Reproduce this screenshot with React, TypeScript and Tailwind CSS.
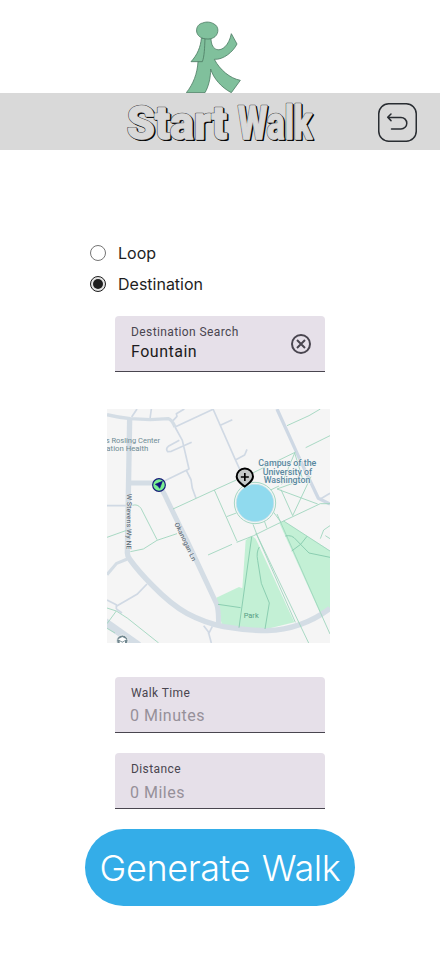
import React from "react";

function Walker() {
  return (
    <svg className="ml-[186px] block h-[72px] w-[55px]" viewBox="228 33 165 216" fill="#80c09c" stroke="#4b7a62" strokeWidth="2.4" strokeLinejoin="round">
      <path d="M303 86C304 135 352 130 364 71L381 102C370 125 340 150 313 148C330 180 360 205 391 211L364 248C335 233 310 205 302 177C302 205 295 231 285 248H229C250 222 262 190 264 155H243C262 135 272 110 274 85Z" />
      <path d="M285 86C284 112 283 140 277 155H264" fill="none" />
      <path d="M276 84C252 74 256 43 278 39C290 34 303 36 312 42C327 49 327 70 315 80C306 88 288 89 276 84Z" />
    </svg>
  );
}

function Word({ x, width, children }: { x: number; width: number; children: string }) {
  const common = { x, textLength: width, lengthAdjust: "spacingAndGlyphs" as const };
  return (
    <g strokeLinejoin="round">
      <text {...common} y="45.5" transform="translate(1.3 1.1)" fill="#000" stroke="#000" strokeWidth="2.2">{children}</text>
      <text {...common} y="45.5" fill="#444" stroke="#444" strokeWidth="2.5">{children}</text>
      <text {...common} y="45.5" fill="#d9d9d9" stroke="#d9d9d9" strokeWidth="1.4">{children}</text>
    </g>
  );
}

function Field({ label, value, valueClass, clear }: { label: string; value: string; valueClass: string; clear?: boolean }) {
  return (
    <div className="flex h-14 w-[210px] items-start justify-between rounded-t border-b border-[#49454f] bg-[#e6e0e9] pl-4 pr-3 pt-2 font-['Roboto',sans-serif]">
      <div>
        <div className="text-xs leading-4 tracking-[0.4px] text-[#49454f]">{label}</div>
        <div className={`text-base leading-6 tracking-[0.5px] ${valueClass}`}>{value}</div>
      </div>
      {clear && (
        <svg className="mt-2 h-6 w-6" viewBox="0 0 24 24" fill="none" stroke="#49454f" strokeWidth="2">
          <circle cx="12" cy="12" r="9" />
          <path d="M8 8l8 8M16 8l-8 8" />
        </svg>
      )}
    </div>
  );
}

function CampusMap() {
  return (
    <svg className="block h-[234px] w-[223px]" viewBox="0 0 669 702" fontFamily="Roboto, sans-serif">
      <rect width="669" height="702" fill="#f5f5f5" />
      <g fill="#c3f0d5">
        <path d="M416 394L434 380L446 389L562 640L470 662L345 650L328 566L396 534L406 538Z" />
        <path d="M517 342L530 336L669 425V600L638 610Z" />
      </g>
      <g fill="none" stroke="#d0d9e4" strokeWidth="5" strokeLinejoin="round">
        <path d="M74 24L90 0M129 30L133 0M198 35L210 22L208 14L232 0M204 54L320 0" />
        <path d="M204 54L226 94L246 180L172 216M217 94L184 112Q175 120 182 128L193 127L254 100M238 184L252 212L256 238L267 268" />
        <path d="M318 0L385 152L400 185M340 49L376 32M385 153L413 138L420 121M0 290H58M640 270L669 253" />
        <path d="M120 525L90 556L28 592M290 650L304 668L313 702M316 652L304 676" />
        <path d="M28 600L45 612M0 573L28 587V600" />
      </g>
      <g fill="none" stroke="#d4dde5" strokeLinejoin="round">
        <path d="M0 17Q38 26 70 29L130 32L184 29Q194 31 204 54" strokeWidth="10" />
        <path d="M68 28L61 432Q61 442 69 452Q95 488 135 528Q191 586 240 613Q290 640 350 653Q420 665 480 665Q585 661 669 598" strokeWidth="16" />
        <path d="M70 222H152L172 255Q210 335 240 395L329 585Q336 608 334 650" strokeWidth="15" />
        <path d="M510 0L573 139L634 268L669 285" stroke="#ced8e4" strokeWidth="10" />
        <path d="M61 450L29 463L0 497" strokeWidth="9" />
        <path d="M-10 636L95 710" strokeWidth="24" />
      </g>
      <g fill="none" stroke="#9cd4bc" strokeWidth="2.6">
        <path d="M198 300L322 243L388 213M437 192L566 129M596 116L669 80M540 50L606 20L640 0" />
        <path d="M322 243L390 397M359 323L388 312M303 438L375 406M389 400L440 380L480 360L517 342L640 284H669M472 336L480 358" />
        <path d="M76 289Q92 284 102 298L150 392M0 385L59 364M70 428L109 420L150 394L210 374" />
        <path d="M563 132L524 226M563 132L587 210M510 240L608 205M510 240L632 285M522 242L557 320M557 320L612 203M480 248L516 231M500 310L522 340" />
        <path d="M438 346L450 378L605 702M447 372L565 640M510 315L640 610L669 675" />
        <path d="M530 336L669 426M640 389L650 363L669 350M655 380L669 389" />
        <path d="M0 597L28 606L62 628L155 702M28 606L0 644M0 658L24 672" />
      </g>
      <g fill="none" stroke="#8bceb1" strokeWidth="3">
        <path d="M434 384L396 656M457 414Q447 430 452 454L463 523L487 582L474 660M333 586L401 596" />
        <path d="M535 381Q555 376 568 393L606 432L669 445M554 426L581 406L600 382" />
      </g>
      <circle cx="444" cy="282" r="62" fill="#f2f5f5" stroke="#a7d7c4" strokeWidth="3" />
      <circle cx="444" cy="282" r="56" fill="#90daee" stroke="#c0dfe5" strokeWidth="2" />
      <g fontSize="24" fill="#6d8b94">
        <text x="-4" y="102" textLength="163" lengthAdjust="spacingAndGlyphs">s Rosling Center</text>
        <text x="-2" y="125" textLength="126" lengthAdjust="spacingAndGlyphs">ation Health</text>
      </g>
      <g fontSize="26" fontWeight="500" fill="#5888a0" stroke="#f5f5f5" strokeWidth="3" paintOrder="stroke">
        <text x="454" y="171" textLength="174" lengthAdjust="spacingAndGlyphs">Campus of the</text>
        <text x="467" y="197" textLength="148" lengthAdjust="spacingAndGlyphs">University of</text>
        <text x="470" y="223" textLength="140" lengthAdjust="spacingAndGlyphs">Washington</text>
      </g>
      <text x="410" y="628" fontSize="23" fill="#569c84" textLength="45" lengthAdjust="spacingAndGlyphs">Park</text>
      <g fontSize="20" fontWeight="500" fill="#63717e" stroke="#f5f5f5" strokeWidth="2" paintOrder="stroke">
        <text transform="translate(60 254) rotate(90.5)" textLength="168" lengthAdjust="spacingAndGlyphs">W Stevens Wy NE</text>
        <text transform="translate(202 344) rotate(64.5)" textLength="126" lengthAdjust="spacingAndGlyphs">Okanogan Ln</text>
      </g>
      <circle cx="156" cy="228" r="19" fill="#7af092" stroke="#141a78" strokeWidth="3.5" />
      <path d="M166 217L158 238L153 231L145 226Z" fill="#10107e" stroke="#10107e" strokeWidth="2" strokeLinejoin="round" />
      <path d="M413 233C406 226 390 219 389 203A24.5 24.5 0 1 1 438 203C437 219 420 226 413 233Z" fill="#c5c9c9" stroke="#000" strokeWidth="6" strokeLinejoin="round" />
      <path d="M413.5 192V216M401.5 204H425.5" stroke="#000" strokeWidth="5" />
      <circle cx="46" cy="695" r="17" fill="#71878f" stroke="#edf1f2" strokeWidth="3" />
      <path d="M33 691L46 684L59 691L46 698ZM38 696V702H54V696L46 701Z" fill="white" />
    </svg>
  );
}

export default function App() {
  return (
    <main className="flex h-[956px] w-[440px] flex-col overflow-hidden bg-white">
      <header>
        <div className="pt-[21px]"><Walker /></div>
        <div className="flex h-[57px] items-center bg-[#d9d9d9]">
          <svg className="ml-[120px] h-[57px] w-[200px] shrink-0 overflow-visible" viewBox="0 0 200 57" fontFamily="Roboto, sans-serif" fontWeight="800" fontSize="46" aria-label="Start Walk">
            <Word x={7} width={100}>Start</Word>
            <Word x={118} width={74}>Walk</Word>
          </svg>
          <button className="ml-[58px] mt-px h-[39px] w-[39px]" aria-label="Back">
            <svg className="block h-[39px] w-[39px]" viewBox="0 0 39 39" fill="none" stroke="#292d32" strokeWidth="1.5" strokeLinecap="round" strokeLinejoin="round">
              <rect x=".75" y=".75" width="37.5" height="37.5" rx="10" />
              <path d="M13.5 26H23a5.8 5.8 0 0 0 0-11.6H10M13 11L9.7 14.3L13 17.6" />
            </svg>
          </button>
        </div>
      </header>
      <div className="ml-[90px] mt-[91px] flex flex-col gap-[7px] font-['Inter',sans-serif] text-base leading-6 text-[#1e1e1e]">
        <label className="flex items-center gap-3">
          <span className="h-4 w-4 rounded-full border border-[#757575]" />Loop
        </label>
        <label className="flex items-center gap-3">
          <span className="flex h-4 w-4 items-center justify-center rounded-full border border-[#1e1e1e] bg-[#e3e3e3]">
            <span className="h-[10px] w-[10px] rounded-full bg-[#1e1e1e]" />
          </span>Destination
        </label>
      </div>
      <div className="ml-[115px] mt-5"><Field label="Destination Search" value="Fountain" valueClass="text-[#1d1b20]" clear /></div>
      <div className="ml-[107px] mt-[37px]"><CampusMap /></div>
      <div className="ml-[115px] mt-[34px] flex flex-col gap-5">
        <Field label="Walk Time" value="0 Minutes" valueClass="-ml-px mt-[3px] text-[#969099]" />
        <Field label="Distance" value="0 Miles" valueClass="-ml-px mt-1 text-[#969099]" />
      </div>
      <button className="ml-[85px] mt-5 flex h-[77px] w-[270px] items-center justify-center whitespace-nowrap rounded-full bg-[#34ade8] font-['Inter',sans-serif] text-[36px] font-[350] leading-none tracking-[-0.4px] text-white [word-spacing:2px]">
        Generate Walk
      </button>
    </main>
  );
}
